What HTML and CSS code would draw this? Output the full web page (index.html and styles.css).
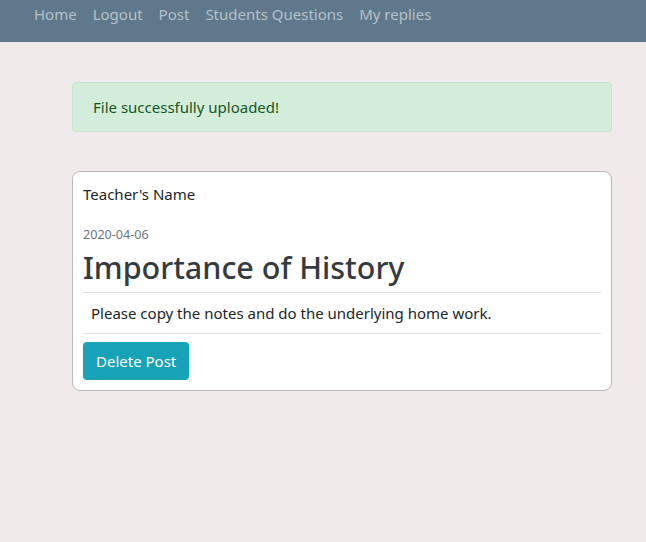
FILE: index.html
```html
<!DOCTYPE html>
<html>
<head>
<meta charset="utf-8">
<link rel="stylesheet" href="styles.css">
</head>
<body>
<nav class="navbar">
  <a class="nav-link" href="#">Home</a>
  <a class="nav-link" href="#">Logout</a>
  <a class="nav-link" href="#">Post</a>
  <a class="nav-link" href="#">Students Questions</a>
  <a class="nav-link" href="#">My replies</a>
</nav>
<main class="content">
  <div class="alert">File successfully uploaded!</div>
  <div class="card">
    <div class="author">Teacher's Name</div>
    <div class="date">2020-04-06</div>
    <h1 class="title">Importance of History</h1>
    <hr class="divider">
    <p class="body-text">Please copy the notes and do the underlying home work.</p>
    <hr class="divider divider-flush">
    <button class="btn-delete">Delete Post</button>
  </div>
</main>
</body>
</html>
```
FILE: styles.css
```css
* { box-sizing: border-box; }
html, body { margin: 0; padding: 0; }
body {
  background: #f0ebea;
  font-family: "Noto Sans", "Open Sans", sans-serif;
  font-size: 15px;
  color: #212529;
  line-height: 1.5;
  height: 542px;
}
.navbar {
  background: #5f788b;
  height: 42px;
  display: flex;
  align-items: flex-start;
  padding: 2px 0 0 26px;
}
.nav-link {
  color: #b5c1ca;
  text-decoration: none;
  padding: 0 8px;
  font-size: 15px;
  line-height: 24px;
}
.content {
  padding: 40px 34px 0 72px;
}
.alert {
  background: #d4edda;
  border: 1px solid #c3e6cb;
  color: #155724;
  border-radius: 4px;
  padding: 12px 20px;
  height: 50px;
  line-height: 24px;
}
.card {
  margin-top: 39px;
  background: #fff;
  border: 1px solid #bdb8b8;
  border-radius: 8px;
  padding: 10px 10px 10px 10px;
}
.author {
  line-height: 24px;
}
.date {
  margin-top: 20px;
  font-size: 12.6px;
  color: #6c757d;
  line-height: 18px;
}
.title {
  margin: 3px 0 0;
  font-size: 30.5px;
  font-weight: 500;
  line-height: 40px;
  color: #343a40;
}
.divider {
  margin: 5px 0 0;
  border: 0;
  border-top: 1px solid #e3e3e3;
}
.divider-flush {
  margin-top: 0;
}
.body-text {
  margin: 0;
  padding: 8px 8px;
  line-height: 24px;
}
.btn-delete {
  display: block;
  margin-top: 8px;
  background: #17a2b8;
  color: #fff;
  border: 0;
  border-radius: 4px;
  font-family: inherit;
  font-size: 15px;
  padding: 7px 13px;
  line-height: 24px;
}
```
